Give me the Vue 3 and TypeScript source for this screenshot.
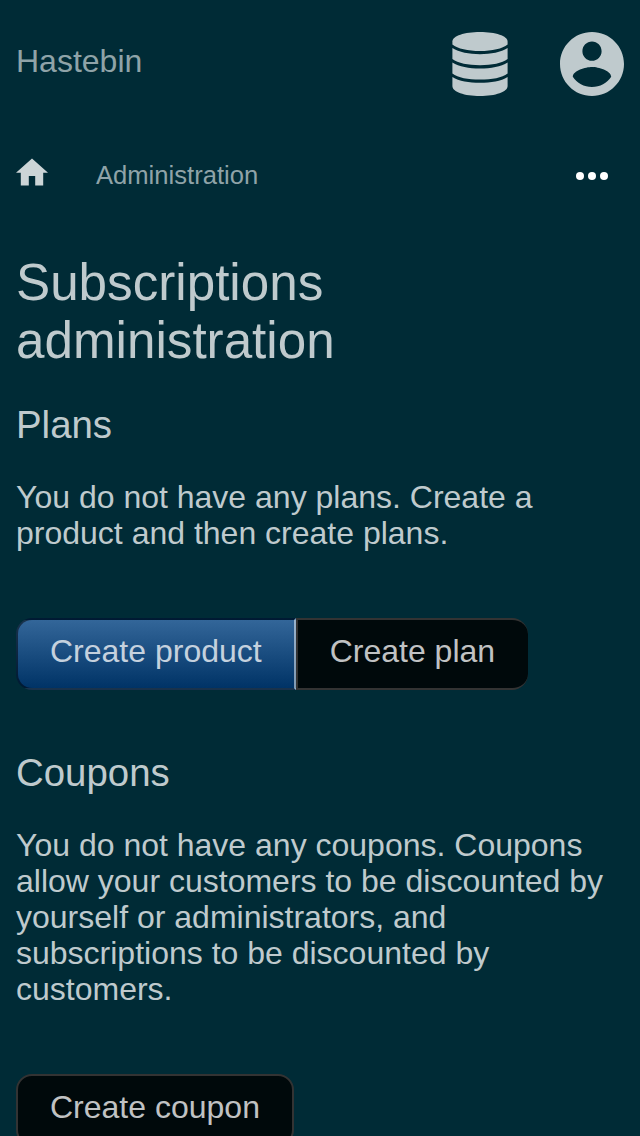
<script setup lang="ts">
const title = 'Subscriptions administration'
</script>

<template>
  <div class="page">
    <header class="top">
      <a class="brand">Hastebin</a>
      <nav class="menus">
        <svg class="database" viewBox="0 0 56 64">
          <path d="M0.400 9.500C0.400 4 12.500 0 28 0S55.600 4 55.600 9.500V12.500C50.500 16.800 40 19 28 19S5.500 16.800 0.400 12.500Z" />
          <path d="M0.400 16C7 20.300 17 22.200 28 22.200S49 20.300 55.600 16V27C50 31.200 40 33.200 28 33.200S6 31.200 0.400 27Z" />
          <path d="M0.400 30.500C7 34.700 17 36.500 28 36.500S49 34.700 55.600 30.500V41.400C50 45.600 40 47.500 28 47.500S6 45.600 0.400 41.400Z" />
          <path d="M0.400 45C7 49.200 17 50.800 28 50.800S49 49.200 55.600 45V54C55.600 60 43.500 64 28 64S0.400 60 0.400 54Z" />
        </svg>
        <svg class="account" viewBox="2 2 20 20">
          <path d="M12 2C6.480 2 2 6.480 2 12s4.480 10 10 10 10-4.480 10-10S17.520 2 12 2zm0 3c1.660 0 3 1.340 3 3s-1.340 3-3 3-3-1.340-3-3 1.340-3 3-3zm0 14.200c-2.500 0-4.710-1.280-6-3.220.030-1.990 4-3.080 6-3.080 1.990 0 5.970 1.090 6 3.080-1.290 1.940-3.500 3.220-6 3.220z" />
        </svg>
      </nav>
    </header>

    <nav class="crumbs">
      <svg class="home" viewBox="2 3 20 17"><path d="M10 20v-6h4v6h5v-8h3L12 3 2 12h3v8z" /></svg>
      <a class="section">Administration</a>
      <svg class="more" viewBox="0 0 32 8">
        <circle cx="4" cy="4" r="4" /><circle cx="16" cy="4" r="4" /><circle cx="28" cy="4" r="4" />
      </svg>
    </nav>

    <main>
      <h1>{{ title }}</h1>
      <section>
        <h2>Plans</h2>
        <p>You do not have any plans. Create a product and then create plans.</p>
        <div class="buttons">
          <a class="button primary">Create product</a>
          <a class="button last">Create plan</a>
        </div>
      </section>
      <section>
        <h2>Coupons</h2>
        <p>You do not have any coupons. Coupons allow your customers to be discounted by yourself or administrators, and subscriptions to be discounted by customers.</p>
        <div class="buttons">
          <a class="button single">Create coupon</a>
        </div>
      </section>
    </main>
  </div>
</template>

<style>
html,
body {
  background: #002b36;
}
</style>

<style scoped>
.page {
  box-sizing: border-box;
  height: 1136px;
  overflow: hidden;
  padding: 32px 16px 0;
  background: #002b36;
  color: #bfcacd;
  font: 32px/36px "Liberation Sans", Arial, sans-serif;
}
.top {
  display: flex;
  justify-content: space-between;
  height: 64px;
}
.brand {
  padding-top: 11px;
  color: #8fa3a8;
}
.menus {
  display: flex;
  gap: 52px;
}
svg {
  display: block;
  fill: #bfcacd;
}
.database {
  width: 56px;
  height: 64px;
}
.account {
  width: 64px;
  height: 64px;
}
.crumbs {
  display: flex;
  height: 29px;
  margin-top: 65px;
}
.home {
  width: 32px;
  height: 28px;
  margin-top: -3px;
  fill: #ccd5d7;
}
.section {
  margin-left: 48px;
  color: #8fa3a8;
  font-size: 25.6px;
  line-height: 29px;
}
.more {
  width: 32px;
  height: 8px;
  margin: 11px 16px 0 auto;
  fill: #fff;
}
h1 {
  width: 400px;
  margin: 64px 0 33px;
  font-size: 51.2px;
  font-weight: 400;
  line-height: 58px;
}
h2 {
  margin: 0 0 33px;
  font-size: 38.4px;
  font-weight: 400;
  line-height: 43px;
}
p {
  margin: 0 0 67px;
}
.buttons {
  display: flex;
  margin-bottom: 61px;
}
.button {
  box-sizing: border-box;
  height: 72px;
  padding: 13px 32px 0;
  border: 2px solid #333;
  background: #00090b;
  color: #c0c2c3;
  white-space: nowrap;
}
.primary {
  border-color: rgba(0, 0, 0, 0.5);
  border-right-color: rgba(255, 255, 255, 0.5);
  border-radius: 16px 0 0 16px;
  background: linear-gradient(#369, #036);
  color: #c5d1de;
}
.last {
  padding-right: 33px;
  border-right: 0;
  border-radius: 0 16px 16px 0;
}
.single {
  border-radius: 16px;
}
</style>
